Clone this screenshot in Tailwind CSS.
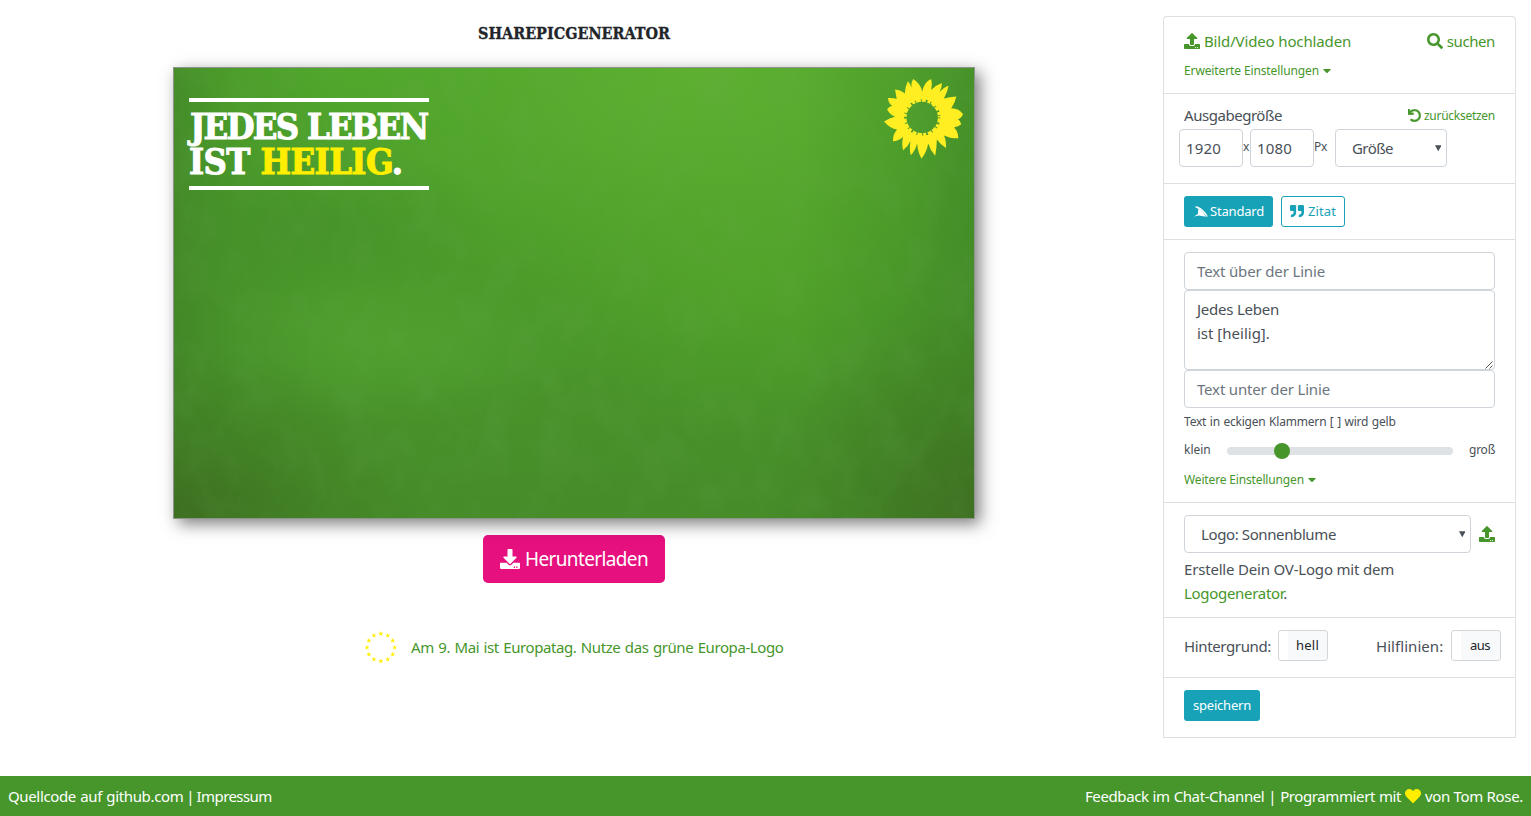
<!DOCTYPE html>
<html lang="de">
<head>
<meta charset="utf-8">
<title>Sharepicgenerator</title>
<script src="https://cdn.jsdelivr.net/npm/@tailwindcss/browser@4"></script>
</head>
<body class="flex h-[816px] flex-col overflow-hidden bg-white font-['Noto_Sans',sans-serif] text-[15px] leading-6 text-[#495057]">
<svg class="hidden">
  <symbol id="upload" viewBox="0 0 512 512"><path d="M296 384h-80c-13.3 0-24-10.7-24-24V192h-87.7c-17.8 0-26.7-21.5-14.1-34.1L242.3 5.7c7.5-7.5 19.8-7.5 27.3 0l152.2 152.2c12.6 12.6 3.7 34.1-14.1 34.1H320v168c0 13.3-10.7 24-24 24zm216-8v112c0 13.3-10.7 24-24 24H24c-13.3 0-24-10.7-24-24V376c0-13.3 10.7-24 24-24h136v8c0 30.9 25.1 56 56 56h80c30.9 0 56-25.1 56-56v-8h136c13.3 0 24 10.7 24 24zm-124 88c0-11-9-20-20-20s-20 9-20 20 9 20 20 20 20-9 20-20zm64 0c0-11-9-20-20-20s-20 9-20 20 9 20 20 20 20-9 20-20z"/></symbol>
  <symbol id="caret" viewBox="0 0 320 512"><path d="M31.3 192h257.3c17.8 0 26.7 21.5 14.1 34.1L174.1 354.8c-7.8 7.8-20.5 7.8-28.3 0L17.2 226.1C4.6 213.5 13.5 192 31.3 192z"/></symbol>
  <symbol id="star" viewBox="-10 -10 20 20"><path d="M0-10 2.3-3.1 9.5-3.1 3.7 1.2 5.9 8.1 0 3.8-5.9 8.1-3.7 1.2-9.5-3.1-2.3-3.1z"/></symbol>
</svg>

<div class="flex h-[776px] items-start">
  <main class="flex w-[1148px] flex-col items-center">
    <h1 class="mt-[22px] h-6 font-['DejaVu_Serif_Condensed','DejaVu_Serif',serif] text-[16px] font-bold text-[#212529] [-webkit-text-stroke:0.3px_#212529]">SHAREPICGENERATOR</h1>

    <div class="relative mt-[21px] h-[452px] w-[802px] border border-[#8e958c] shadow-[5px_5px_15px_rgba(0,0,0,0.5)]">
      <svg class="absolute inset-0 h-[450px] w-[800px]" viewBox="0 0 800 450" preserveAspectRatio="none">
        <defs>
          <linearGradient id="base" x1="0" y1="0" x2="0" y2="1"><stop offset="0" stop-color="#50a72c"/><stop offset=".45" stop-color="#4b9a2a"/><stop offset="1" stop-color="#468c29"/></linearGradient>
          <radialGradient id="glow" gradientUnits="userSpaceOnUse" cx="0" cy="0" r="1" gradientTransform="translate(530 0) scale(420 270)"><stop offset="0" stop-color="#5db030"/><stop offset=".4" stop-color="#58ac2e" stop-opacity=".75"/><stop offset="1" stop-color="#52a52b" stop-opacity="0"/></radialGradient>
          <radialGradient id="mid" gradientUnits="userSpaceOnUse" cx="0" cy="0" r="1" gradientTransform="translate(220 275) scale(220 80)"><stop offset="0" stop-color="#54a733" stop-opacity=".6"/><stop offset="1" stop-color="#54a733" stop-opacity="0"/></radialGradient>
          <radialGradient id="mid2" gradientUnits="userSpaceOnUse" cx="0" cy="0" r="1" gradientTransform="translate(580 210) scale(230 160)"><stop offset="0" stop-color="#54a92a" stop-opacity=".6"/><stop offset="1" stop-color="#54a92a" stop-opacity="0"/></radialGradient>
          <radialGradient id="dark" gradientUnits="userSpaceOnUse" cx="0" cy="0" r="1" gradientTransform="translate(140 155) scale(190 80)"><stop offset="0" stop-color="#418b29" stop-opacity=".5"/><stop offset="1" stop-color="#418b29" stop-opacity="0"/></radialGradient>
          <radialGradient id="bl" gradientUnits="userSpaceOnUse" cx="0" cy="0" r="1" gradientTransform="translate(0 450) scale(260 170)"><stop offset="0" stop-color="#3d6e20"/><stop offset="1" stop-color="#417c23" stop-opacity="0"/></radialGradient>
          <radialGradient id="br" gradientUnits="userSpaceOnUse" cx="0" cy="0" r="1" gradientTransform="translate(800 450) scale(210 220)"><stop offset="0" stop-color="#3d6e20"/><stop offset="1" stop-color="#417c23" stop-opacity="0"/></radialGradient>
          <linearGradient id="sides"><stop offset="0" stop-color="#3f7f26" stop-opacity=".65"/><stop offset=".08" stop-color="#3f8526" stop-opacity=".25"/><stop offset=".2" stop-color="#3f8526" stop-opacity="0"/><stop offset=".78" stop-color="#3f8526" stop-opacity="0"/><stop offset=".92" stop-color="#3f8526" stop-opacity=".3"/><stop offset="1" stop-color="#3f8526" stop-opacity=".65"/></linearGradient>
          <filter id="clouds" x="0" y="0" width="100%" height="100%"><feTurbulence type="fractalNoise" baseFrequency=".03 .022" numOctaves="6" seed="7"/><feColorMatrix values="0 0 0 0 .15  0 0 0 0 .4  0 0 0 0 .1  1.6 0 0 0 -.66"/></filter>
        </defs>
        <rect width="800" height="450" fill="url(#base)"/>
        <rect width="800" height="450" fill="url(#mid)"/>
        <rect width="800" height="450" fill="url(#mid2)"/>
        <rect width="800" height="450" fill="url(#glow)"/>
        <rect width="800" height="450" fill="url(#dark)"/>
        <rect width="800" height="450" fill="url(#sides)"/>
        <rect width="800" height="450" fill="url(#bl)"/>
        <rect width="800" height="450" fill="url(#br)"/>
        <rect width="800" height="450" filter="url(#clouds)" opacity=".2"/>
      </svg>
      <div class="absolute left-[15px] top-[30px] h-[92px] w-[240px] whitespace-nowrap border-y-4 border-white pt-[7px] font-['DejaVu_Serif_Condensed','DejaVu_Serif',serif] text-[36px] font-bold leading-[35px] text-white">
        <div class="pl-px tracking-[-1.75px] [-webkit-text-stroke:1px_#fff]">JEDES LEBEN</div>
        <div class="tracking-[-0.6px] [-webkit-text-stroke:1px_#fff]">IST <span class="text-[#ffee00] [-webkit-text-stroke:1px_#ffee00]">HEILIG</span>.</div>
      </div>
      <svg class="absolute left-[705px] top-[5.5px] size-[87px]" viewBox="60 40 260 260">
        <mask id="hole"><rect x="60" y="40" width="260" height="260" fill="#fff"/><circle cx="189" cy="170" r="47" fill="#000"/><circle cx="189" cy="170" r="50" fill="none" stroke="#000" stroke-width="9" stroke-dasharray="3 12 5 9 3 14"/></mask>
        <path mask="url(#hole)" fill="#ffee22" d="M189 92Q196 62 216 55Q220 70 216 88Q232 72 248 67Q249 80 241 94Q252 80 268 75Q264 95 254 113Q270 108 291 107Q288 125 276 142Q300 142 311 160Q306 172 296 175Q304 180 306 190Q296 198 284 200Q297 212 297 232Q275 234 254 224Q262 240 260 261Q244 252 233 236Q232 264 228 284Q212 266 207 248Q202 275 187 293Q176 275 174 248Q168 270 155 283Q150 265 154 240Q146 258 132 268Q127 250 132 228Q118 240 102 241Q100 222 114 206Q94 204 75 182Q92 172 108 168Q92 160 84 145Q92 136 100 136Q88 128 87 112Q102 110 113 115Q110 98 108 86Q126 88 137 98Q138 78 146 62Q154 70 157 80Q155 66 162 55Q184 68 189 92Z"/>
      </svg>
    </div>

    <button class="mt-4 flex h-12 w-[182px] items-center rounded-[5px] bg-[#e6107e] pl-[17px] text-[19px] leading-none text-white">
      <svg class="mr-[5px] size-5 shrink-0 fill-white" viewBox="0 0 512 512"><path d="M216 0h80c13.3 0 24 10.7 24 24v168h87.7c17.8 0 26.7 21.5 14.1 34.1L269.7 378.3c-7.5 7.5-19.8 7.5-27.3 0L90.1 226.1c-12.6-12.6-3.7-34.1 14.1-34.1H192V24c0-13.3 10.7-24 24-24zm296 376v112c0 13.3-10.7 24-24 24H24c-13.3 0-24-10.7-24-24V376c0-13.3 10.7-24 24-24h146.7l49 49c20.1 20.1 52.5 20.1 72.6 0l49-49H488c13.3 0 24 10.7 24 24zm-124 88c0-11-9-20-20-20s-20 9-20 20 9 20 20 20 20-9 20-20zm64 0c0-11-9-20-20-20s-20 9-20 20 9 20 20 20 20-9 20-20z"/></svg>
      <span class="tracking-[-0.63px]">Herunterladen</span>
    </button>

    <a class="mt-12 flex h-8 w-[418px] items-center whitespace-nowrap text-[#46962b]">
      <svg class="mr-[14px] size-8 shrink-0 overflow-visible fill-[#ffee00]" viewBox="0 0 32 32">
        <use href="#star" x="13.1" y="0" width="5.4" height="5.4"/><use href="#star" x="20" y="1.8" width="5.4" height="5.4"/><use href="#star" x="25" y="6.9" width="5.4" height="5.4"/><use href="#star" x="26.9" y="13.8" width="5.4" height="5.4"/><use href="#star" x="25" y="20.7" width="5.4" height="5.4"/><use href="#star" x="20" y="25.7" width="5.4" height="5.4"/><use href="#star" x="13.1" y="27.5" width="5.4" height="5.4"/><use href="#star" x="6.2" y="25.7" width="5.4" height="5.4"/><use href="#star" x="1.2" y="20.7" width="5.4" height="5.4"/><use href="#star" x="-.6" y="13.8" width="5.4" height="5.4"/><use href="#star" x="1.2" y="6.9" width="5.4" height="5.4"/><use href="#star" x="6.2" y="1.8" width="5.4" height="5.4"/>
      </svg>
      <span class="tracking-[-0.42px] [word-spacing:1px]">Am 9. Mai ist Europatag. Nutze das grüne Europa-Logo</span>
    </a>
  </main>

  <aside class="ml-[15px] mt-4 w-[353px] whitespace-nowrap rounded-t border border-b-0 border-[#dfdfdf]">
    <section class="h-[77px] border-b border-[#dfdfdf] px-5 pt-3 text-[#46962b]">
      <div class="flex items-center justify-between">
        <a class="flex items-center"><svg class="mr-1 size-4 fill-current"><use href="#upload"/></svg><span class="tracking-[-0.14px]">Bild/Video hochladen</span></a>
        <a class="flex items-center"><svg class="mr-1 size-4 fill-current" viewBox="0 0 512 512"><path d="M505 442.7L405.3 343c-4.5-4.5-10.6-7-17-7H372c27.6-35.3 44-79.7 44-128C416 93.1 322.9 0 208 0S0 93.1 0 208s93.1 208 208 208c48.3 0 92.7-16.4 128-44v16.3c0 6.4 2.5 12.5 7 17l99.7 99.7c9.4 9.4 24.6 9.4 33.9 0l28.3-28.3c9.4-9.4 9.4-24.6.1-34zM208 336c-70.7 0-128-57.2-128-128 0-70.7 57.2-128 128-128 70.7 0 128 57.2 128 128 0 70.7-57.2 128-128 128z"/></svg><span class="tracking-[-0.4px]">suchen</span></a>
      </div>
      <a class="mt-[6px] flex items-center text-[12px]"><span class="tracking-[-0.12px]">Erweiterte Einstellungen</span><svg class="mb-[2px] ml-1 h-[13px] w-2 fill-current"><use href="#caret"/></svg></a>
    </section>

    <section class="h-[90px] border-b border-[#dfdfdf] pl-[15px] pr-5 pt-[9px]">
      <div class="flex h-[25px] items-start justify-between pl-[5px]">
        <span class="tracking-[-0.46px]">Ausgabegröße</span>
        <a class="flex items-center pt-px text-[12px] text-[#46962b]"><svg class="mb-[2px] mr-[3px] size-[13px] fill-current" viewBox="0 0 512 512"><path d="M212.333 224.333H12c-6.627 0-12-5.373-12-12V12C0 5.373 5.373 0 12 0h48c6.627 0 12 5.373 12 12v78.112C117.773 39.279 184.26 7.47 258.175 8.007c136.906.994 246.448 111.623 246.157 248.532C504.041 393.258 393.12 504 256.333 504c-64.089 0-122.496-24.313-166.51-64.215-5.099-4.622-5.334-12.554-.467-17.42l33.967-33.967c4.474-4.474 11.662-4.717 16.401-.525C170.76 415.336 211.58 432 256.333 432c97.268 0 176-78.716 176-176 0-97.267-78.716-176-176-176-58.496 0-110.28 28.476-142.274 72.333h98.274c6.627 0 12 5.373 12 12v48c0 6.627-5.373 12-12 12z" stroke="currentColor" stroke-width="14"/></svg><span class="tracking-[-0.27px]">zurücksetzen</span></a>
      </div>
      <div class="mt-px flex h-[38px]">
        <div class="w-16 rounded border border-[#ced4da] pl-[6px] leading-[37px] tracking-[0.17px]">1920</div>
        <span class="w-[7px] pt-[6px] text-[12px]">x</span>
        <div class="w-16 rounded border border-[#ced4da] pl-[6px] leading-[37px] tracking-[0.17px]">1080</div>
        <span class="w-[21px] pt-[6px] text-[12px] tracking-[-0.3px]">Px</span>
        <div class="flex w-28 items-center justify-between rounded border border-[#ced4da] pl-4 pr-[5px]"><span class="tracking-[-0.56px]">Größe</span><svg class="size-[6.5px] fill-[#495057]" viewBox="0 0 7 7"><path d="M0 .3h7L3.5 6.8z"/></svg></div>
      </div>
    </section>

    <section class="flex h-14 gap-2 border-b border-[#dfdfdf] px-5 pt-3 text-[13px]">
      <button class="flex h-[31px] w-[89px] items-center rounded-[3px] bg-[#17a2b8] pb-px pl-[10px] text-white"><svg class="mr-[2px] h-[11px] w-[14px] fill-white" viewBox="0 0 14 11"><path d="M1.500.2C6.500.6 11 5 13.800 10.200L12.400 10.700C10 6.600 6.200 3 1.500 1.500Z"/><path d="M4.300 2.700C7.800 4.300 10.200 7.300 11.700 10.700L5 9.500.1 10.500 3.900 7.900Z"/></svg><span class="tracking-[-0.19px]">Standard</span></button>
      <button class="flex h-[31px] w-16 items-center rounded-[3px] border border-[#17a2b8] pb-px pl-2 text-[#17a2b8]"><svg class="mr-1 size-[14px] fill-current" viewBox="0 0 512 512"><path d="M464 32H336c-26.5 0-48 21.5-48 48v128c0 26.5 21.5 48 48 48h80v64c0 35.3-28.7 64-64 64h-8c-13.3 0-24 10.7-24 24v48c0 13.3 10.7 24 24 24h8c88.4 0 160-71.6 160-160V80c0-26.5-21.5-48-48-48zm-288 0H48C21.5 32 0 53.5 0 80v128c0 26.5 21.5 48 48 48h80v64c0 35.3-28.7 64-64 64h-8c-13.3 0-24 10.7-24 24v48c0 13.3 10.7 24 24 24h8c88.4 0 160-71.6 160-160V80c0-26.5-21.5-48-48-48z"/></svg><span class="tracking-[0.11px]">Zitat</span></button>
    </section>

    <section class="h-[263px] border-b border-[#dfdfdf] px-5 pt-3">
      <div class="h-[38px] rounded border border-[#ced4da] pl-3 leading-[37px] tracking-[-0.15px] text-[#6c757d]">Text über der Linie</div>
      <div class="relative h-20 rounded border border-[#ced4da] pl-3 pt-[6px]"><div class="tracking-[-0.24px]">Jedes Leben</div><div>ist [heilig].</div>
        <svg class="absolute bottom-0 right-px size-2 stroke-[#555]" viewBox="0 0 8 8"><path d="M.5 7.500 7.500.5M4.500 7.500 7.500 4.500"/></svg>
      </div>
      <div class="h-[38px] rounded border border-[#ced4da] pl-3 leading-[37px] tracking-[-0.17px] text-[#6c757d]">Text unter der Linie</div>
      <div class="mt-[2px] text-[12px] tracking-[-0.2px] [word-spacing:0.6px]">Text in eckigen Klammern [ ] wird gelb</div>
      <div class="mt-[4px] flex h-6 items-center text-[12px]">
        <span class="w-[43px]">klein</span>
        <div class="relative mt-px h-2 w-[226px] rounded-full bg-[#dee2e6]"><span class="absolute -top-1 left-[47px] size-4 rounded-full bg-[#46962b]"></span></div>
        <span class="ml-4 tracking-[-0.23px]">groß</span>
      </div>
      <a class="mt-[6px] flex items-center text-[12px] text-[#46962b]"><span class="tracking-[-0.15px]">Weitere Einstellungen</span><svg class="mb-px ml-1 h-[13px] w-2 fill-current"><use href="#caret"/></svg></a>
    </section>

    <section class="h-[115px] border-b border-[#dfdfdf] px-5 pt-3">
      <div class="flex items-center justify-between">
        <div class="flex h-[38px] w-[287px] items-center justify-between rounded border border-[#ced4da] pl-4 pr-[5px]"><span class="tracking-[-0.39px]">Logo: Sonnenblume</span><svg class="size-[6.5px] fill-[#495057]" viewBox="0 0 7 7"><path d="M0 .3h7L3.5 6.800z"/></svg></div>
        <svg class="size-4 fill-[#46962b]"><use href="#upload"/></svg>
      </div>
      <div class="mt-1 tracking-[-0.19px]">Erstelle Dein OV-Logo mit dem</div>
      <div class="tracking-[-0.3px]"><a class="text-[#46962b]">Logogenerator</a>.</div>
    </section>

    <section class="flex h-[60px] border-b border-[#dfdfdf] pl-5 pt-3">
      <span class="w-[94px] pt-1 tracking-[-0.37px]">Hintergrund:</span>
      <div class="h-[31px] w-[50px] rounded-[3px] border border-[#d3d6d9] bg-linear-to-r from-white from-[9px] to-[#f8f9fa] to-[9px] pl-[17px] text-[13px] leading-[29px] tracking-[0.23px] text-[#212529]">hell</div>
      <span class="ml-12 w-[75px] pt-1 tracking-[0.05px]">Hilflinien:</span>
      <div class="h-[31px] w-[50px] rounded-[3px] border border-[#d3d6d9] bg-linear-to-r from-white from-[9px] to-[#f8f9fa] to-[9px] pl-[18px] text-[13px] leading-[29px] tracking-[-0.52px] text-[#212529]">aus</div>
    </section>

    <section class="h-[60px] border-b border-[#dfdfdf] px-5 pt-3">
      <button class="block h-[31px] w-[76px] rounded-[3px] bg-[#17a2b8] pb-[2px] text-[13px] tracking-[-0.21px] text-white">speichern</button>
    </section>
  </aside>
</div>

<footer class="flex h-10 items-center justify-between whitespace-nowrap bg-[#46962b] px-2 text-white">
  <span><span class="tracking-[-0.36px] [word-spacing:0.8px]">Quellcode auf github.com</span><span class="tracking-[-0.6px] [word-spacing:-0.5px]"> | Impressum</span></span>
  <span class="flex items-center"><span class="tracking-[-0.4px] [word-spacing:0.5px]">Feedback im Chat-Channel | Programmiert mit</span><svg class="mx-1 size-4 fill-[#ffee00]" viewBox="0 0 512 512"><path d="M462.3 62.6C407.500 15.900 326 24.300 275.700 76.200L256 96.500l-19.700-20.300C186.100 24.300 104.500 15.900 49.700 62.600c-62.800 53.600-66.100 149.800-9.900 207.900l193.500 199.800c12.500 12.900 32.800 12.900 45.300 0l193.500-199.800c56.300-58.100 53-154.300-9.800-207.900z"/></svg><span class="tracking-[-0.33px]">von Tom Rose.</span></span>
</footer>
</body>
</html>
